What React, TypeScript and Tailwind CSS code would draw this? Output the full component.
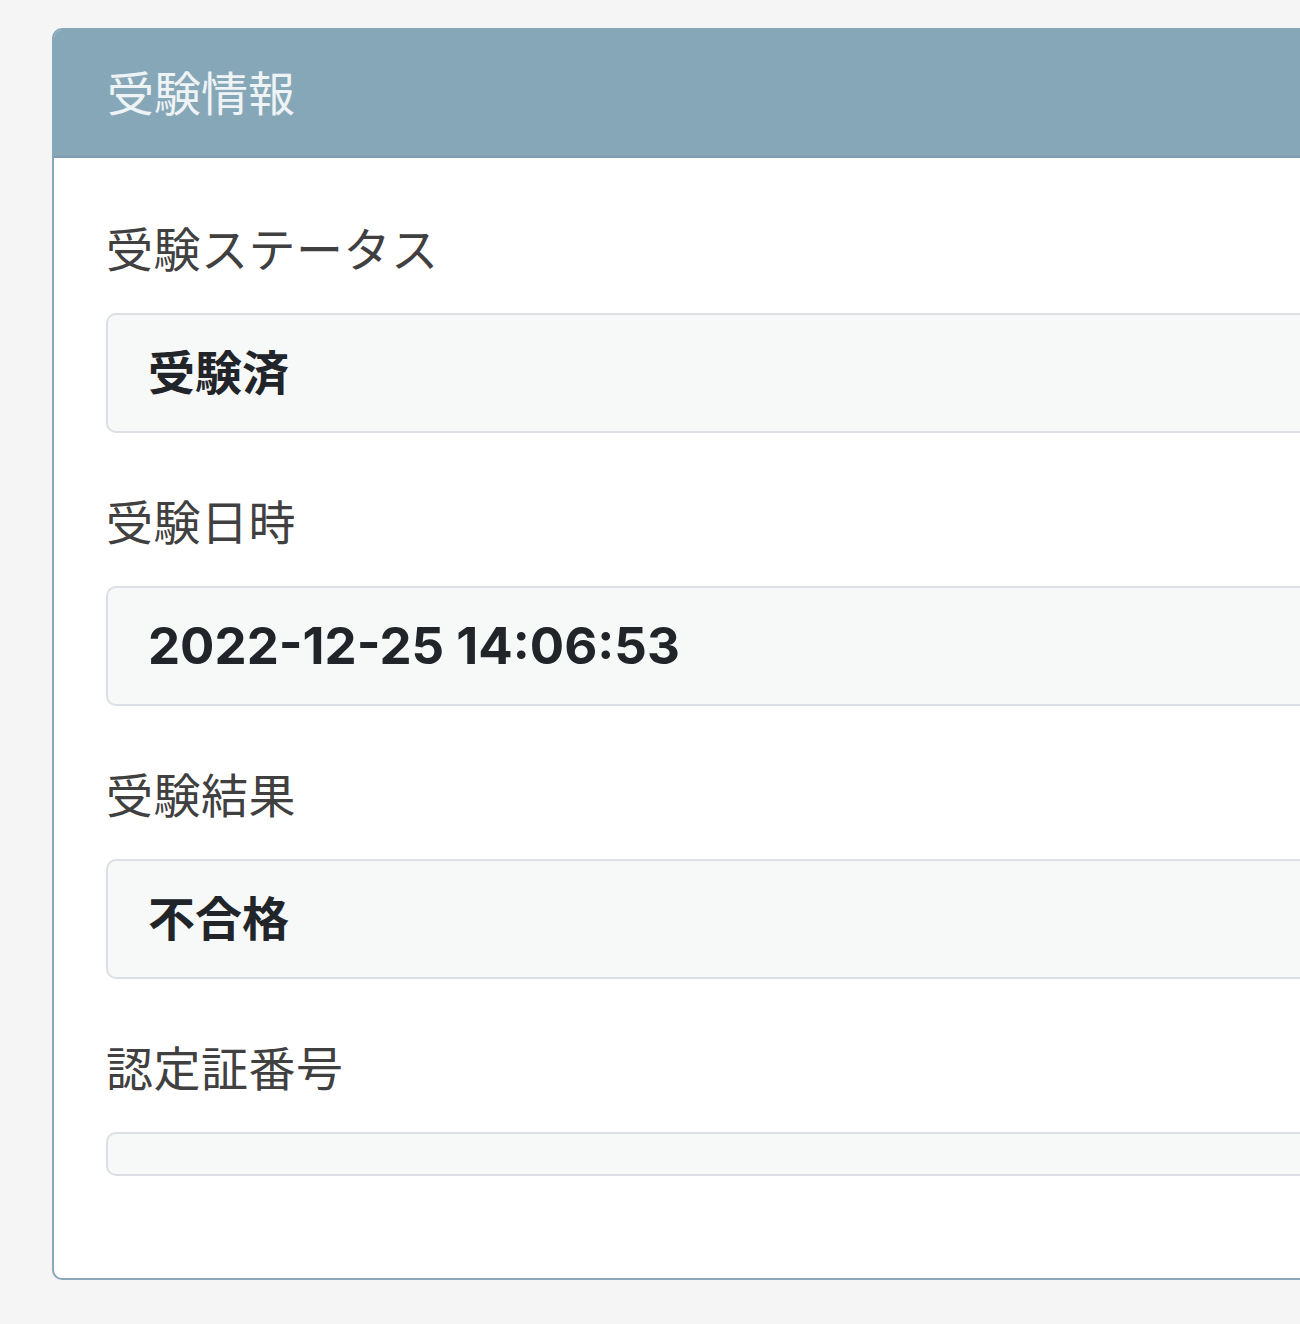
const fields = [
  { label: '受験ステータス', value: '受験済', latin: false },
  { label: '受験日時', value: '2022-12-25 14:06:53', latin: true },
  { label: '受験結果', value: '不合格', latin: false },
  { label: '認定証番号', value: '', latin: false },
];

export default function App() {
  return (
    <div
      className="min-h-screen overflow-hidden bg-[#f5f5f5] pt-[28px] pl-[52px]"
      style={{ fontFamily: 'Inter, "Noto Sans CJK JP", sans-serif' }}
    >
      <div className="w-[1400px] overflow-hidden rounded-[10px] border-2 border-[#88a7b8] bg-white">
        {/* header */}
        <div className="flex h-[128px] items-center border-b-2 border-[#7d9cad] bg-[#86a7b7] px-[53px]">
          <h2 className="text-[47px] font-normal leading-none text-[#eef3f5]">受験情報</h2>
        </div>

        {/* body */}
        <div className="px-[52px] pt-[64px] pb-[102px]">
          {fields.map((f, i) => (
            <div key={f.label} className={i < fields.length - 1 ? 'mb-[62px]' : ''}>
              <div className="mb-[35px] text-[47px] leading-[56px] tracking-[0.5px] text-[#404040]">
                {f.label}
              </div>
              <div
                className={
                  'flex items-center rounded-[10px] border-2 border-[#dcdfe3] bg-[#f7f8f8] pl-[40px] font-bold text-[#212529] ' +
                  (f.latin ? 'text-[51px] ' : 'text-[47px] ') +
                  (f.value ? 'h-[120px]' : 'h-[44px]')
                }
              >
                {f.value}
              </div>
            </div>
          ))}
        </div>
      </div>
    </div>
  );
}
